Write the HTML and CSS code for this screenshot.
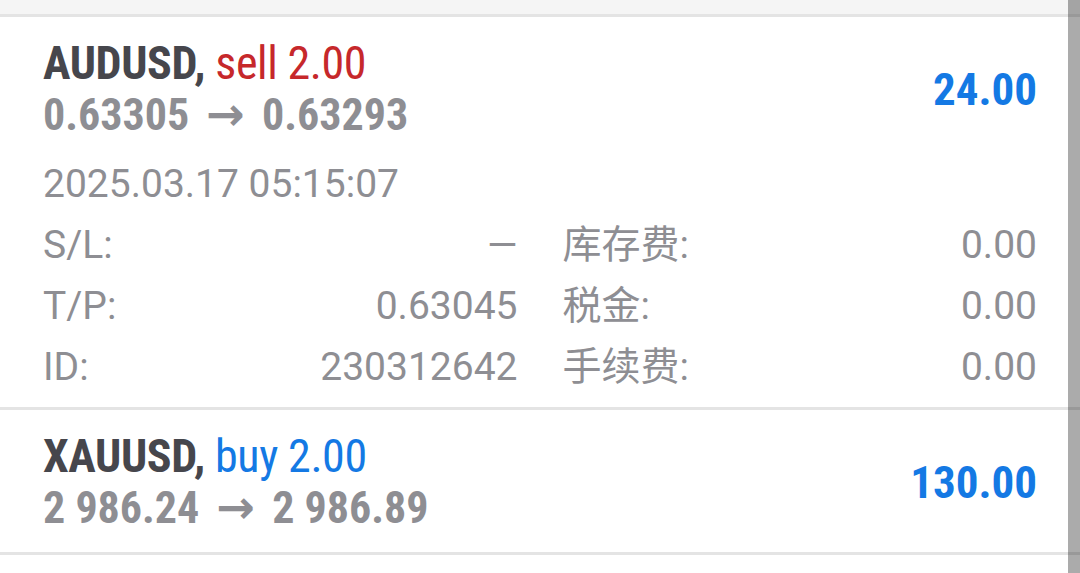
FILE: index.html
```html
<!DOCTYPE html>
<html lang="en">
<head>
    <meta charset="UTF-8">
    <meta name="viewport" content="width=device-width, initial-scale=1.0">
    <title>Positions</title>
    <link rel="stylesheet" href="styles.css">
</head>
<body>

    <div class="topbar"></div>

    <div class="orders">
        <!-- Expanded order: shows time and details -->
        <div class="order order-open">
            <div class="order-head">
                <div class="order-info">
                    <div class="order-title"><span class="symbol">AUDUSD,</span> <span class="sell">sell 2.00</span></div>
                    <div class="order-prices">0.63305 <span class="arrow">→</span> 0.63293</div>
                </div>
                <div class="order-profit">24.00</div>
            </div>
            <div class="order-time">2025.03.17 05:15:07</div>
            <div class="order-fields">
                <div class="field"><span>S/L:</span><span>—</span></div>
                <div class="field"><span>库存费:</span><span>0.00</span></div>
                <div class="field"><span>T/P:</span><span>0.63045</span></div>
                <div class="field"><span>税金:</span><span>0.00</span></div>
                <div class="field"><span>ID:</span><span>230312642</span></div>
                <div class="field"><span>手续费:</span><span>0.00</span></div>
            </div>
        </div>

        <div class="order">
            <div class="order-head">
                <div class="order-info">
                    <div class="order-title"><span class="symbol">XAUUSD,</span> <span class="buy">buy 2.00</span></div>
                    <div class="order-prices">2 986.24 <span class="arrow">→</span> 2 986.89</div>
                </div>
                <div class="order-profit">130.00</div>
            </div>
        </div>
    </div>

    <div class="scrollbar"></div>

</body>
</html>
```

FILE: styles.css
```css
body {
    margin: 0;
    background-color: #ffffff;
    font-family: Roboto, "Noto Sans CJK SC", sans-serif;
    color: #8e8e93;
    position: relative;
    height: 573px;
    overflow: hidden;
}
.topbar {
    height: 14px;
    background-color: #f5f5f5;
    border-bottom: 3px solid #e4e4e4;
}
.order {
    padding: 21px 43px 18px 43px;
    border-bottom: 3px solid #e4e4e4;
}
.order-open {
    padding-bottom: 9px;
}
.order-head {
    display: flex;
    justify-content: space-between;
    align-items: center;
}
.order-title,
.order-prices,
.order-profit {
    font-family: "Roboto Condensed", Roboto, sans-serif;
}
.order-title {
    font-size: 46px;
    line-height: 50px;
    letter-spacing: -0.4px;
    white-space: nowrap;
}
.symbol {
    font-weight: bold;
    color: #46464c;
}
.sell {
    color: #c6282b;
}
.buy {
    color: #1479e4;
}
.order-prices {
    font-size: 44px;
    line-height: 52px;
    font-weight: bold;
    white-space: nowrap;
}
.arrow {
    font-family: "DejaVu Sans", sans-serif;
    font-size: 46px;
    margin: 0 7px;
}
.order-profit {
    font-size: 45px;
    font-weight: bold;
    color: #1479e4;
}
.order-time {
    margin-top: 21px;
    font-size: 39px;
    line-height: 44px;
}
.order-fields {
    margin-top: 9px;
    display: grid;
    grid-template-columns: 1fr 1fr;
    column-gap: 45px;
    font-size: 39px;
    line-height: 61px;
}
.field {
    display: flex;
    justify-content: space-between;
}
.scrollbar {
    position: absolute;
    top: 0;
    right: 0;
    width: 12px;
    height: 100%;
    background-color: rgba(0, 0, 0, 0.33);
}
```
